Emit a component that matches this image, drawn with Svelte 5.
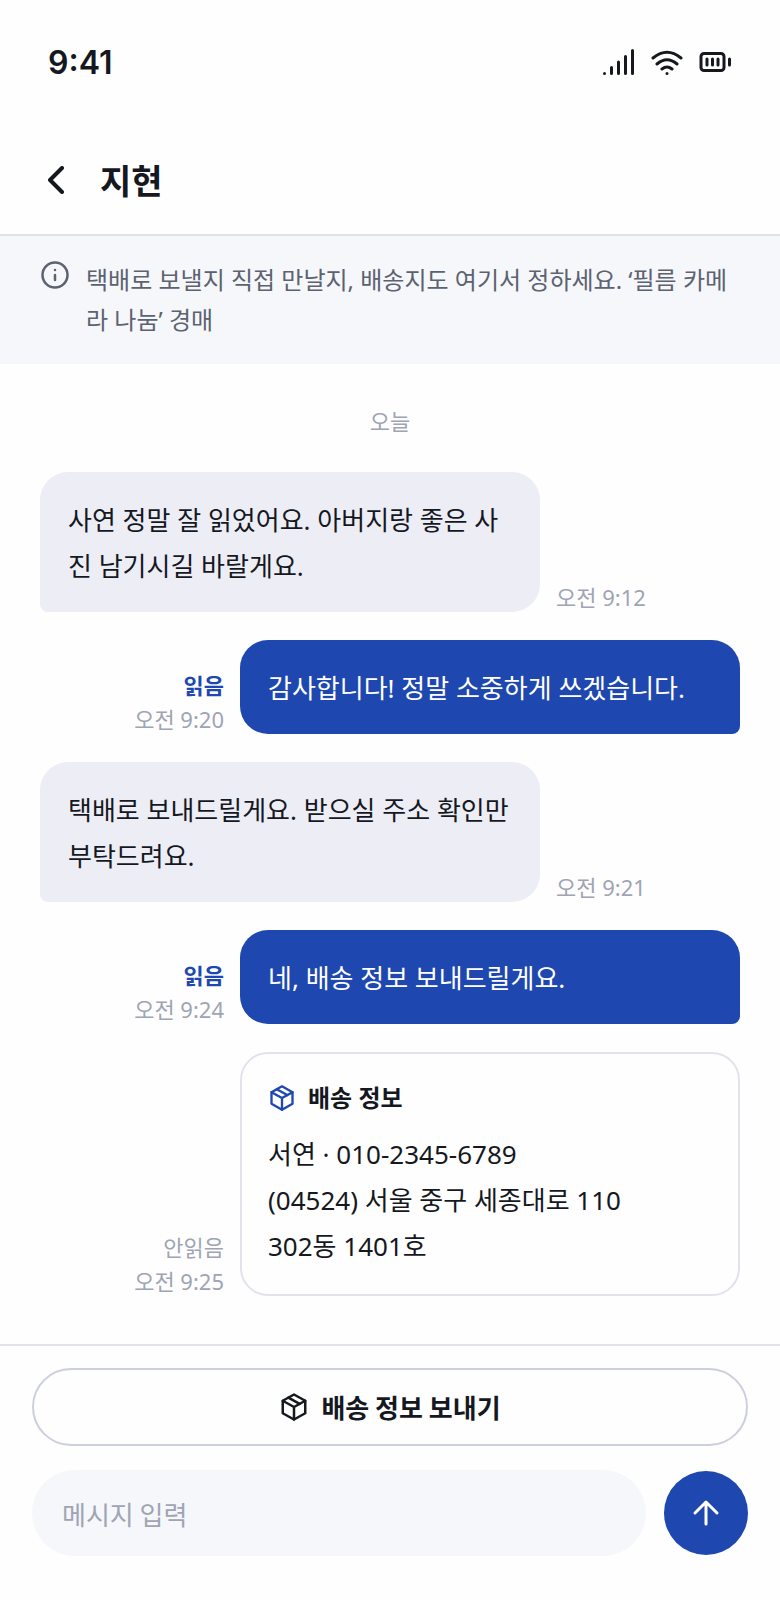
<script lang="ts">
  type Message = {
    mine: boolean;
    text: string;
    time: string;
    read?: boolean;
    delivery?: string[];
  };

  const messages: Message[] = [
    {
      mine: false,
      text: "사연 정말 잘 읽었어요. 아버지랑 좋은 사진 남기시길 바랄게요.",
      time: "오전 9:12",
    },
    {
      mine: true,
      text: "감사합니다! 정말 소중하게 쓰겠습니다.",
      time: "오전 9:20",
      read: true,
    },
    {
      mine: false,
      text: "택배로 보내드릴게요. 받으실 주소 확인만 부탁드려요.",
      time: "오전 9:21",
    },
    {
      mine: true,
      text: "네, 배송 정보 보내드릴게요.",
      time: "오전 9:24",
      read: true,
    },
    {
      mine: true,
      text: "배송 정보",
      time: "오전 9:25",
      read: false,
      delivery: [
        "서연 · 010-2345-6789",
        "(04524) 서울 중구 세종대로 110",
        "302동 1401호",
      ],
    },
  ];

  let draft = $state("");
</script>

{#snippet box()}
  <svg class="icon" viewBox="0 0 24 24" aria-hidden="true">
    <path d="M12 2l9 5v10l-9 5-9-5V7z" />
    <path d="M3 7l9 5 9-5M12 12v10" />
    <path d="M7.500 4.500l9 5" />
  </svg>
{/snippet}

<div class="screen">
  <div class="status">
    <span class="clock">9:41</span>
    <div class="signals">
      <svg width="34" height="32" viewBox="0 0 34 32" aria-hidden="true">
        <path d="M2.5 26.5v0M9.5 20.5v6M16.5 15v11.5M23.5 9.5v17M30.5 3.5v23" />
      </svg>
      <svg width="34" height="32" viewBox="0 0 34 32" aria-hidden="true">
        <path d="M3 11Q17-.5 31 11M7 17q10-8.500 20 0M12 22q5-4 10 0M17 26.500v0" />
      </svg>
      <svg width="34" height="32" viewBox="0 0 34 32" aria-hidden="true">
        <rect x="3" y="6.500" width="23" height="17" rx="3" />
        <path d="M9 12v6M14.500 12v6M20 12v6M31.500 12v6" />
      </svg>
    </div>
  </div>

  <header>
    <button class="back" aria-label="뒤로">
      <svg viewBox="0 0 16 28" aria-hidden="true"><path d="M14 2 2 14l12 12" /></svg>
    </button>
    <h1>지현</h1>
  </header>

  <div class="notice">
    <svg class="icon" viewBox="0 0 24 24" aria-hidden="true">
      <circle cx="12" cy="12" r="10" />
      <path d="M12 16v-4M12 8h.01" />
    </svg>
    <p>택배로 보낼지 직접 만날지, 배송지도 여기서 정하세요. ‘필름 카메라 나눔’ 경매</p>
  </div>

  <main>
    <p class="day">오늘</p>
    {#each messages as message}
      <div class="row" class:mine={message.mine}>
        {#if message.delivery}
          <div class="bubble card">
            <h2>{@render box()}{message.text}</h2>
            {#each message.delivery as line}
              <p>{line}</p>
            {/each}
          </div>
        {:else}
          <p class="bubble">{message.text}</p>
        {/if}
        <div class="meta">
          {#if message.mine}
            <span class:read={message.read}>{message.read ? "읽음" : "안읽음"}</span>
          {/if}
          <time>{message.time}</time>
        </div>
      </div>
    {/each}
  </main>

  <footer>
    <button class="share">{@render box()}배송 정보 보내기</button>
    <form onsubmit={(e) => e.preventDefault()}>
      <input bind:value={draft} placeholder="메시지 입력" aria-label="메시지 입력" />
      <button class="send" aria-label="보내기">
        <svg viewBox="0 0 28 28" aria-hidden="true"><path d="M14 25V3M3 14 14 3l11 11" /></svg>
      </button>
    </form>
  </footer>
</div>

<style>
  :global(body) {
    margin: 0;
    background: #fefefe;
  }

  .screen {
    display: flex;
    flex-direction: column;
    min-height: 100vh;
    color: #15181f;
    font-family: "Noto Sans", "Noto Sans CJK KR", sans-serif;
    font-size: 26px;
    line-height: 46px;
  }

  h1,
  h2,
  p {
    margin: 0;
  }

  button,
  input {
    padding: 0;
    border: 0;
    background: none;
    color: inherit;
    font: inherit;
  }

  button {
    cursor: pointer;
  }

  h1,
  .day,
  .share,
  input {
    font-family: "Noto Sans CJK KR", sans-serif;
  }

  svg {
    flex: none;
    fill: none;
    stroke: currentColor;
    stroke-width: 3;
    stroke-linecap: round;
    stroke-linejoin: round;
  }

  .icon {
    width: 28px;
    height: 28px;
    stroke-width: 2;
  }

  .status {
    display: flex;
    align-items: center;
    justify-content: space-between;
    height: 126px;
    padding: 0 48px;
  }

  .clock {
    font-family: Inter, sans-serif;
    font-size: 32px;
    font-weight: 600;
  }

  .signals {
    display: flex;
    gap: 14px;
  }

  header {
    display: flex;
    align-items: center;
    gap: 36px;
    height: 108px;
    padding: 0 48px;
    border-bottom: 2px solid #e1e3ea;
  }

  .back {
    display: flex;
  }

  .back svg {
    width: 16px;
    height: 28px;
    stroke-width: 4;
  }

  h1 {
    font-size: 34px;
    font-weight: 600;
  }

  .notice {
    display: flex;
    gap: 16px;
    padding: 24px 40px;
    background: #f5f7fb;
    color: #5c6270;
    font-size: 24px;
    line-height: 40px;
  }

  .notice .icon {
    width: 30px;
    height: 30px;
  }

  main {
    display: flex;
    flex: 1;
    flex-direction: column;
    gap: 28px;
    padding: 40px 40px 48px;
  }

  .day {
    margin-bottom: 8px;
    color: #9fa4b4;
    font-size: 22px;
    line-height: 32px;
    text-align: center;
  }

  .row {
    display: flex;
    align-items: flex-end;
    gap: 16px;
  }

  .row.mine {
    flex-direction: row-reverse;
  }

  .bubble {
    box-sizing: border-box;
    width: min(500px, 72%);
    padding: 25px 28px 23px;
    border-radius: 28px 28px 28px 8px;
    background: #ecedf5;
  }

  .mine .bubble {
    border-radius: 28px 28px 8px 28px;
    background: #1e47b0;
    color: #fff;
  }

  .mine .card {
    padding: 23px 26px 25px;
    border: 2px solid #e1e3ea;
    border-radius: 28px;
    background: none;
    color: inherit;
  }

  h2 {
    display: flex;
    align-items: center;
    gap: 12px;
    margin-bottom: 12px;
    font-size: 24px;
    font-weight: 600;
    line-height: 42px;
  }

  h2 :global(svg) {
    color: #1e47b0;
  }

  .meta {
    display: flex;
    flex-direction: column;
    gap: 4px;
    color: #9fa4b4;
    font-size: 22px;
    line-height: 30px;
    text-align: right;
  }

  .read {
    color: #1e47b0;
    font-weight: 600;
  }

  footer {
    display: flex;
    flex-direction: column;
    gap: 24px;
    padding: 22px 32px 44px;
    border-top: 2px solid #e1e3ea;
  }

  .share {
    display: flex;
    align-items: center;
    justify-content: center;
    gap: 12px;
    height: 78px;
    border: 2px solid #cccfdd;
    border-radius: 39px;
    font-weight: 600;
  }

  .share .icon {
    width: 30px;
    height: 30px;
  }

  form {
    display: flex;
    align-items: center;
    gap: 18px;
  }

  input {
    box-sizing: border-box;
    flex: 1;
    min-width: 0;
    height: 86px;
    padding: 0 30px;
    border-radius: 43px;
    background: #f5f7fb;
  }

  input::placeholder {
    color: #9fa4b4;
    opacity: 1;
  }

  .send {
    display: grid;
    place-items: center;
    width: 84px;
    height: 84px;
    border-radius: 50%;
    background: #1e47b0;
    color: #fff;
  }

  .send svg {
    width: 28px;
    height: 28px;
  }
</style>
